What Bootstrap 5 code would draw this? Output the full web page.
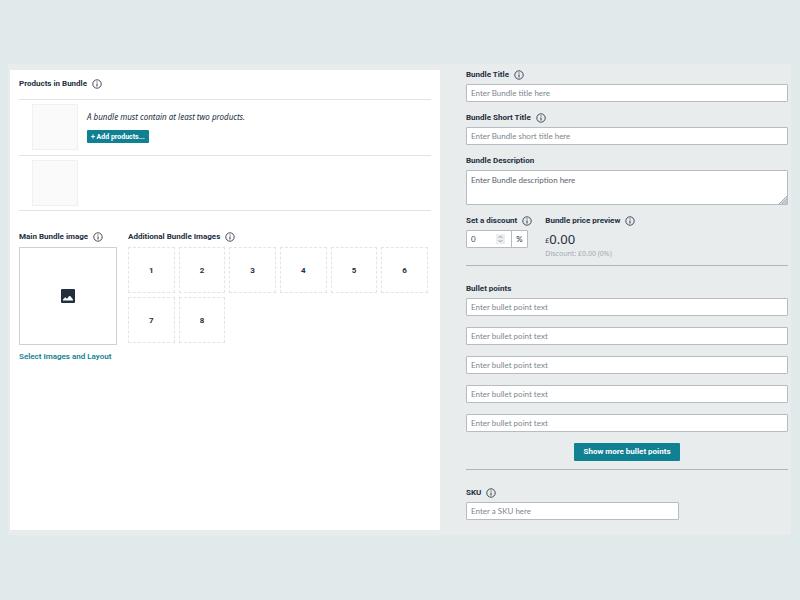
<!DOCTYPE html>
<html lang="en">
<head>
<meta charset="utf-8">
<meta name="viewport" content="width=device-width, initial-scale=1">
<title>Create bundle</title>
<link href="https://cdn.jsdelivr.net/npm/bootstrap@5.3.0/dist/css/bootstrap.min.css" rel="stylesheet">
<style>
  body { background: #e1eaeb; color: #232f3e; font-family: "Noto Sans", "Open Sans", sans-serif; font-size: 8px; line-height: 12px; }
  .bundle-app { display: grid; grid-template-columns: 430fr 322fr; gap: 26px; background: #e8eced; margin: 64px 9px 64px 8px; padding: 6px 3px 5px 2px; }
  .products-panel { background: #fff; padding: 9px 9px 10px; }
  .details-panel { padding-bottom: 10px; }
  .field-label { display: flex; align-items: center; gap: 5px; height: 10px; margin: 0 0 4px; font-family: Roboto, sans-serif; font-size: 8px; line-height: 12px; font-weight: 700; white-space: nowrap; }
  .field-label svg { width: 10px; height: 10px; flex: none; }
  .field { margin-bottom: 11px; }
  .product-list { margin-top: 10px; }
  .product-row { display: flex; height: 56px; padding: 4px 13px 0; gap: 9px; border-top: 1px solid #e1e3e4; }
  .product-row:last-child { border-bottom: 1px solid #e1e3e4; }
  .product-thumb { width: 46px; height: 46px; background: #fafafa; border: 1px solid #f0f0f0; flex: none; }
  .hint { margin: 7px 0; font-style: italic; }
  .teal-btn { display: block; background: #108093; color: #fff; border: 0; border-radius: 1px; font-family: Roboto, sans-serif; font-weight: 700; font-size: 8px; line-height: 12px; }
  .teal-btn:hover { background: #0b6b7c; }
  .add-btn { font-size: 7px; padding: 0 4px; height: 13px; }
  .more-btn { padding: 0 9px; height: 18px; margin-top: 11px; }
  .images-area { margin-top: 21px; gap: 11px; padding-right: 3px; }
  .main-image { width: 98px; height: 98px; border: 1px solid #ccd3d3; background: #fff; padding: 0; margin: 5px 0; }
  .main-image svg { width: 14px; height: 14px; }
  .select-link { color: #108093; font-family: Roboto, sans-serif; font-weight: 600; line-height: 14px; text-decoration: none; white-space: nowrap; }
  .image-slots { display: grid; grid-template-columns: repeat(6, 1fr); gap: 4px; margin-top: 5px; }
  .image-slot { height: 46px; border: 1px dashed #e3e4e5; background: #fff; color: #232f3e; font-family: Roboto, sans-serif; font-weight: 700; padding: 1px 0 0; }
  .text-field { display: block; width: 100%; height: 18px; border: 1px solid #b6bdc2; border-radius: 1px; background: #fff; color: #232f3e; padding: 0 4px; font-family: Lato, sans-serif; font-size: 8px; line-height: 12px; }
  .text-field::placeholder { color: #7d868c; opacity: 1; }
  .text-area { height: 35px; padding-top: 3px; resize: none; }
  .text-area::placeholder { color: #59636d; }
  .area-wrap { position: relative; }
  .area-wrap svg { position: absolute; right: 1px; bottom: 1px; width: 8px; height: 8px; }
  .discount-area { gap: 13px; }
  .discount-group { display: flex; width: 62px; height: 18px; border: 1px solid #b6bdc2; border-radius: 1px; background: #fff; align-items: center; font-family: Lato, sans-serif; }
  .discount-group input { width: 29px; height: 16px; border: 0; padding: 0 4px; color: #37424e; background: transparent; appearance: textfield; -moz-appearance: textfield; }
  .discount-group input::-webkit-inner-spin-button { appearance: none; -webkit-appearance: none; }
  .discount-group svg { width: 9px; height: 10px; margin-right: 6px; flex: none; }
  .unit { flex: 1; height: 16px; border-left: 1px solid #b6bdc2; text-align: center; line-height: 16px; }
  .price { font-size: 13px; line-height: 18px; }
  .price span { font-size: 7px; line-height: 8px; vertical-align: 1px; }
  .saving { color: #a5abaf; font-size: 7px; line-height: 12px; }
  .divider { margin: 0 0 18px; border: 0; border-top: 1px solid #aeb4b8; opacity: 1; }
  .divider-price { margin-top: 5px; }
  .divider-sku { margin-top: 8px; }
  .bullets { display: grid; gap: 11px; }
  .sku-field { width: 66%; }
</style>
<script src="https://cdn.jsdelivr.net/npm/bootstrap@5.3.0/dist/js/bootstrap.bundle.min.js"></script>
</head>
<body>
<svg class="d-none" aria-hidden="true">
  <symbol id="info" viewBox="0 0 20 20"><circle cx="10" cy="10" r="8.4" fill="none" stroke="#3c4653" stroke-width="1.9"/><path d="M10 8.8v6M10 5v2.2" stroke="#3c4653" stroke-width="2.2"/></symbol>
</svg>
<main class="bundle-app">
  <section class="products-panel">
    <h2 class="field-label mb-0">Products in Bundle <svg><use href="#info"/></svg></h2>
    <div class="product-list">
      <div class="product-row">
        <div class="product-thumb"></div>
        <div>
          <p class="hint">A bundle must contain at least two products.</p>
          <button type="button" class="teal-btn add-btn">+ Add products...</button>
        </div>
      </div>
      <div class="product-row"><div class="product-thumb"></div></div>
    </div>
    <div class="d-flex images-area">
      <div class="flex-shrink-0">
        <h2 class="field-label mb-0">Main Bundle image <svg><use href="#info"/></svg></h2>
        <button type="button" class="main-image d-flex align-items-center justify-content-center" aria-label="Main bundle image">
          <svg viewBox="0 0 14 14"><rect width="14" height="14" rx="1" fill="#232f3e"/><path d="M2 11.5V10.6L3.9 8.4H4.8L6 9.7 8.2 6.9H9.2L12 10.4V11.5Z" fill="#fff"/></svg>
        </button>
        <a href="#" class="select-link d-block">Select Images and Layout</a>
      </div>
      <div class="flex-grow-1">
        <h2 class="field-label mb-0">Additional Bundle Images <svg><use href="#info"/></svg></h2>
        <div class="image-slots">
          <button type="button" class="image-slot">1</button>
          <button type="button" class="image-slot">2</button>
          <button type="button" class="image-slot">3</button>
          <button type="button" class="image-slot">4</button>
          <button type="button" class="image-slot">5</button>
          <button type="button" class="image-slot">6</button>
          <button type="button" class="image-slot">7</button>
          <button type="button" class="image-slot">8</button>
        </div>
      </div>
    </div>
  </section>
  <form class="details-panel">
    <div class="field">
      <label class="field-label" for="title">Bundle Title <svg><use href="#info"/></svg></label>
      <input class="text-field" id="title" type="text" placeholder="Enter Bundle title here">
    </div>
    <div class="field">
      <label class="field-label" for="short">Bundle Short Title <svg><use href="#info"/></svg></label>
      <input class="text-field" id="short" type="text" placeholder="Enter Bundle short title here">
    </div>
    <div class="field">
      <label class="field-label" for="desc">Bundle Description</label>
      <div class="area-wrap">
        <textarea class="text-field text-area" id="desc" placeholder="Enter Bundle description here"></textarea>
        <svg viewBox="0 0 8 8"><path d="M8 0V8H0Z" fill="#d3d7d9"/><path d="M0 8L8 0M3 8L8 3M6 8L8 6" stroke="#9aa1a6" stroke-width=".8"/></svg>
      </div>
    </div>
    <div class="d-flex discount-area">
      <div>
        <label class="field-label" for="discount">Set a discount <svg><use href="#info"/></svg></label>
        <div class="discount-group">
          <input id="discount" type="number" value="0" min="0" max="100">
          <svg viewBox="0 0 9 10"><path d="M0 0h9v10H0z" fill="#eceeef"/><path d="M2.5 4L4.5 2l2 2M2.5 6L4.5 8l2-2" fill="none" stroke="#8a9196" stroke-width=".9"/></svg>
          <span class="unit">%</span>
        </div>
      </div>
      <div>
        <div class="field-label">Bundle price preview <svg><use href="#info"/></svg></div>
        <div class="price"><span>£</span>0.00</div>
        <div class="saving">Discount: £0.00 (0%)</div>
      </div>
    </div>
    <hr class="divider divider-price">
    <label class="field-label" for="bullet">Bullet points</label>
    <div class="bullets">
      <input class="text-field" id="bullet" type="text" placeholder="Enter bullet point text">
      <input class="text-field" type="text" aria-label="Bullet point 2" placeholder="Enter bullet point text">
      <input class="text-field" type="text" aria-label="Bullet point 3" placeholder="Enter bullet point text">
      <input class="text-field" type="text" aria-label="Bullet point 4" placeholder="Enter bullet point text">
      <input class="text-field" type="text" aria-label="Bullet point 5" placeholder="Enter bullet point text">
    </div>
    <button type="button" class="teal-btn more-btn mx-auto">Show more bullet points</button>
    <hr class="divider divider-sku">
    <label class="field-label" for="sku">SKU <svg><use href="#info"/></svg></label>
    <input class="text-field sku-field" id="sku" type="text" placeholder="Enter a SKU here">
  </form>
</main>
</body>
</html>
